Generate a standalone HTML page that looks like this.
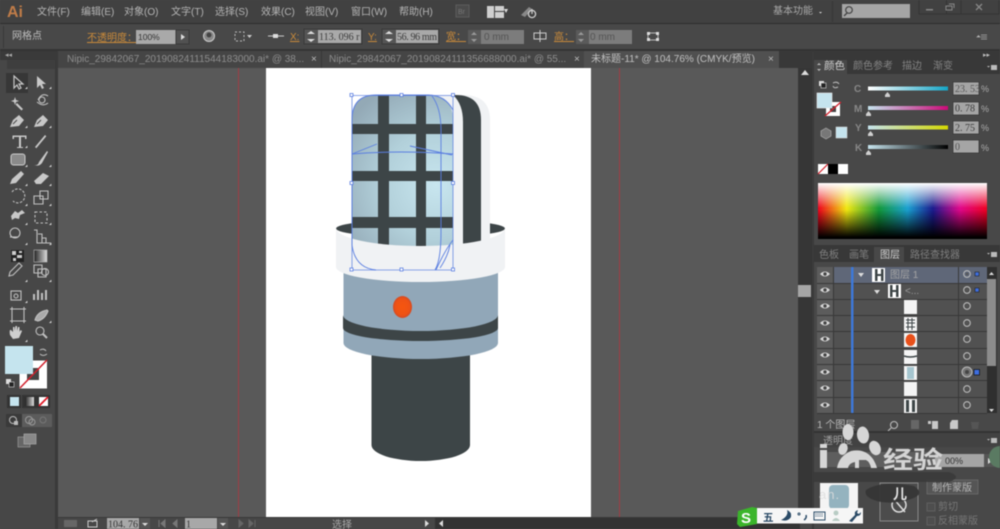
<!DOCTYPE html>
<html><head><meta charset="utf-8"><style>
html,body{margin:0;padding:0;width:1000px;height:529px;overflow:hidden;background:#4a4a4a}
svg{display:block;position:absolute;left:0;top:0;filter:blur(.45px)}
text{font-family:"Liberation Sans","Noto Sans CJK SC",sans-serif;font-size:10px;fill:#c4c4c4}
.m{font-size:10px;fill:#b4b4b4}
.o{fill:#c98a3a;font-size:10px}
.v{font-family:"Liberation Serif","Noto Sans CJK SC",serif;font-size:10px;fill:#3c3c3c}
.t{fill:#8d8d8d;font-size:10px}
</style></head><body>
<svg width="1000" height="529" viewBox="0 0 1000 529" xmlns="http://www.w3.org/2000/svg">
<defs>
<radialGradient id="gl" gradientUnits="userSpaceOnUse" cx="436" cy="185" r="108"><stop offset="0" stop-color="#c8e6ef"/><stop offset=".5" stop-color="#b2d0da"/><stop offset="1" stop-color="#93a9b6"/></radialGradient>
<radialGradient id="rd"><stop offset="0" stop-color="#f6560f"/><stop offset=".75" stop-color="#ee5215"/><stop offset="1" stop-color="#d24a24"/></radialGradient>
<linearGradient id="sp"><stop offset="0" stop-color="#ee001c"/><stop offset=".17" stop-color="#f0e810"/><stop offset=".36" stop-color="#12983a"/><stop offset=".53" stop-color="#19a0d0"/><stop offset=".68" stop-color="#1a1a8c"/><stop offset=".84" stop-color="#e0068a"/><stop offset="1" stop-color="#ee0020"/></linearGradient>
<linearGradient id="wb" x1="0" y1="0" x2="0" y2="1"><stop offset="0" stop-color="#fff"/><stop offset=".45" stop-color="#fff" stop-opacity="0"/><stop offset=".5" stop-color="#000" stop-opacity=".05"/><stop offset=".97" stop-color="#000"/></linearGradient>
<linearGradient id="sc"><stop offset="0" stop-color="#fff"/><stop offset="1" stop-color="#14a5c6"/></linearGradient>
<linearGradient id="sm"><stop offset="0" stop-color="#c6e4ee"/><stop offset="1" stop-color="#cc0a78"/></linearGradient>
<linearGradient id="sy"><stop offset="0" stop-color="#c6e4ee"/><stop offset="1" stop-color="#d4d800"/></linearGradient>
<linearGradient id="sk"><stop offset="0" stop-color="#c6e4ee"/><stop offset="1" stop-color="#000"/></linearGradient>
<linearGradient id="gr"><stop offset="0" stop-color="#222"/><stop offset="1" stop-color="#ddd"/></linearGradient>
<g id="eye"><path d="M-5 0Q0-5 5 0Q0 5-5 0Z" fill="#d8d8d8"/><circle r="1.700" fill="#444"/></g>
<g id="tg"><circle r="3.300" fill="none" stroke="#bbb" stroke-width="1.100"/><circle r="1.200" fill="#555"/></g>
<path id="tri" d="M0 0h2.400v-2.400z" fill="#d8d8d8"/>
</defs>

<!-- base -->
<rect width="1000" height="529" fill="#484848"/>
<rect width="1000" height="24" fill="#414141"/>
<rect y="23" width="1000" height="1" fill="#2e2e2e"/>
<rect y="24" width="1000" height="26" fill="#484848"/>
<rect y="49" width="1000" height="2" fill="#343434"/>
<!-- tabs bar -->
<rect x="0" y="51" width="812" height="17" fill="#383838"/>
<rect x="58" y="51" width="263" height="17" fill="#454545"/>
<rect x="322" y="51" width="262" height="17" fill="#454545"/>
<rect x="584" y="51" width="195" height="17" fill="#505050"/>
<!-- canvas -->
<rect x="58" y="68" width="740" height="449" fill="#595959"/>
<rect x="266" y="68" width="325" height="449" fill="#fff"/>
<rect x="238" y="68" width="1" height="449" fill="#a03c44"/>
<rect x="619" y="68" width="1" height="449" fill="#a03c44"/>
<!-- left toolbar -->
<rect x="0" y="51" width="57" height="478" fill="#474747"/>
<rect x="0" y="51" width="57" height="9" fill="#3a3a3a"/>
<rect x="7" y="60" width="50" height="9" fill="#3e3e3e"/>
<rect x="55" y="51" width="3" height="478" fill="#3a3a3a"/>
<!-- v scrollbar -->
<rect x="798" y="68" width="14" height="449" fill="#363636"/>
<rect x="798" y="285" width="13" height="12" fill="#a6a6a6"/>
<path d="M801 75l4-5 4 5z" fill="#ddd"/>
<rect x="812" y="51" width="2" height="478" fill="#3a3a3a"/>
<!-- status bar -->
<rect x="58" y="517" width="740" height="12" fill="#474747"/>
<rect x="435" y="517" width="365" height="12" fill="#333"/>
<rect x="58" y="517" width="740" height="1" fill="#383838"/>

<!-- menu -->
<text x="7" y="17" style="font-size:16px;fill:#c07c48;font-weight:bold">Ai</text>
<text class="m" x="37" y="15">文件(F)</text>
<text class="m" x="81" y="15">编辑(E)</text>
<text class="m" x="124" y="15">对象(O)</text>
<text class="m" x="171" y="15">文字(T)</text>
<text class="m" x="215" y="15">选择(S)</text>
<text class="m" x="261" y="15">效果(C)</text>
<text class="m" x="305" y="15">视图(V)</text>
<text class="m" x="351" y="15">窗口(W)</text>
<text class="m" x="399" y="15">帮助(H)</text>
<rect x="456" y="5" width="13" height="12" fill="#4b4b4b" stroke="#5c5c5c"/>
<text x="458" y="14" style="font-size:7px;fill:#777">Br</text>
<path d="M487 6h7v12h-7zM495 6h9v5h-9zM495 12h9v6h-9z" fill="#cfcfcf"/>
<path d="M504 9l4 0-2 4z" fill="#ddd"/>
<path d="M521 15l8-8 3 2-7 8z" fill="#888"/>
<circle cx="532" cy="14" r="3.600" fill="none" stroke="#cfcfcf" stroke-width="1.300"/><path d="M532 9v5" stroke="#cfcfcf" stroke-width="1.200"/>
<text class="m" x="773" y="14" style="fill:#a8a8a8">基本功能</text>
<path d="M819 12h3l-1.500 1.500z" fill="#ddd"/>
<rect x="832" y="1" width="1" height="21" fill="#363636"/>
<rect x="842" y="4" width="68" height="14" fill="#a5a5a5"/>
<circle cx="849" cy="10" r="3.300" fill="none" stroke="#444" stroke-width="1.200"/><path d="M847 13l-3 3" stroke="#444" stroke-width="1.300"/>
<path d="M919 0v14h80v-14M946.500 0v14M961 0v14" fill="none" stroke="#343434"/>
<rect x="926" y="9" width="7" height="1.500" fill="#888"/>
<path d="M946 6h6v4h-6zM949 4h5v4" fill="none" stroke="#888"/>
<path d="M976 4l6 6M982 4l-6 6" stroke="#888" stroke-width="1.300"/>

<!-- control bar -->
<rect x="3" y="26" width="1" height="22" fill="#383838"/>
<text x="12" y="39" style="fill:#bcbcbc">网格点</text>
<text class="o" x="87" y="41" text-decoration="underline">不透明度：</text>
<rect x="136" y="30" width="40" height="14" fill="#a9a9a9"/>
<text x="138" y="40" style="fill:#333;font-size:8.500px">100%</text>
<rect x="176" y="30" width="13" height="14" fill="#515151" stroke="#3a3a3a"/>
<path d="M181 34l4 3-4 3z" fill="#ddd"/>
<circle cx="209" cy="36" r="5.500" fill="#888" stroke="#ccc"/><circle cx="209" cy="35" r="2.500" fill="#444"/>
<rect x="235" y="32" width="9" height="9" fill="none" stroke="#bbb" stroke-dasharray="2 2"/>
<path d="M247 35h5l-2.500 3z" fill="#ccc"/>
<path d="M268 36h16" stroke="#ccc"/><rect x="273" y="34" width="5" height="4" fill="#ddd"/>
<text class="o" x="290" y="40" text-decoration="underline">X:</text>
<rect x="304" y="29" width="58" height="15" fill="#555" stroke="#383838"/>
<rect x="318" y="30" width="43" height="13" fill="#a9a9a9"/>
<path d="M307 34l4-3 4 3zM307 39l4 3 4-3z" fill="#ddd"/>
<text class="v" x="319" y="40">113. 096 r</text>
<text class="o" x="368" y="40" text-decoration="underline">Y:</text>
<rect x="382" y="29" width="57" height="15" fill="#555" stroke="#383838"/>
<rect x="396" y="30" width="42" height="13" fill="#a9a9a9"/>
<path d="M385 34l4-3 4 3zM385 39l4 3 4-3z" fill="#ddd"/>
<text class="v" x="397" y="40" textLength="40">56. 96 mm</text>
<text class="o" x="446" y="40" text-decoration="underline">宽：</text>
<rect x="468" y="30" width="56" height="14" fill="#7c7c7c"/>
<rect x="468" y="30" width="13" height="14" fill="#5a5a5a"/>
<path d="M471 35l3-3 3 3zM471 39l3 3 3-3z" fill="#999"/>
<text x="484" y="40" style="fill:#555">0 mm</text>
<path d="M534 33h12v6h-12z M540 30v12" fill="none" stroke="#ccc"/>
<text class="o" x="554" y="40" text-decoration="underline">高：</text>
<rect x="576" y="30" width="56" height="14" fill="#7c7c7c"/>
<rect x="576" y="30" width="13" height="14" fill="#5a5a5a"/>
<path d="M578 35l3-3 3 3zM578 39l3 3 3-3z" fill="#999"/>
<text x="590" y="40" style="fill:#555">0 mm</text>
<path d="M648 33h10v7h-10z" fill="none" stroke="#bbb"/><path d="M647 32h3v3h-3zM656 32h3v3h-3zM647 38h3v3h-3zM656 38h3v3h-3z" fill="#ddd"/>
<path d="M977 37h3l-1.500-1.500zM981 35h6M981 37h6M981 39h6" stroke="#aaa" fill="#ddd" stroke-width=".7"/>

<!-- tabs -->
<text x="5" y="57" style="font-size:7px;fill:#aaa">◂◂</text>
<text class="t" x="67" y="62">Nipic_29842067_20190824111544183000.ai* @ 38...</text>
<text class="t" x="311" y="62" style="fill:#bbb">×</text>
<text class="t" x="329" y="62">Nipic_29842067_20190824111356688000.ai* @ 55...</text>
<text class="t" x="574" y="62" style="fill:#bbb">×</text>
<text x="591" y="62" style="fill:#c0c0c0">未标题-11* @ 104.76% (CMYK/预览)</text>
<text x="768" y="62" style="fill:#bbb">×</text>

<!-- microphone -->
<path d="M371.500 340H470V445A49.250 16 0 0 1 371.500 445Z" fill="#3d4547"/>
<path d="M343.500 255H498V343A77.250 16 0 0 1 343.500 343Z" fill="#91a7b8"/>
<path d="M343 315A77.500 16 0 0 0 498 315V328A77.500 13 0 0 1 343 328Z" fill="#3d4547"/>
<ellipse cx="402.500" cy="307" rx="9.500" ry="11" fill="url(#rd)"/>
<ellipse cx="420.500" cy="228.500" rx="84.500" ry="9" fill="#3d4547"/>
<path d="M430 95h33q27 0 27 25v128h-60z" fill="#f0f2f4"/>
<path d="M453 95h3q25 0 25 25v128h-18V122q0-18-10-27z" fill="#3d4547"/>
<path d="M376 95h52q25 0 25 25v130h-101V120q0-25 24-25z" fill="url(#gl)"/>
<path d="M378 95h11v155h-11zM416 95h10v155h-10zM352 124h101v10h-101zM352 171h101v10h-101zM352 217h101v11h-101z" fill="#3d4547"/>
<path d="M336 228A84.500 18 0 0 0 505 228V267A84.500 15 0 0 1 336 267Z" fill="#f0f2f4"/>
<!-- selection -->
<g fill="none" stroke="#5a7ee0" stroke-width=".9">
<path d="M352 245V120Q352 95 376 95H428Q445 95 453 110"/>
<path d="M352 95.500H453M352 270H453M352 95V270M453 95V270" stroke-width=".8" opacity=".9"/>
<path d="M352 154Q400 150 453 154"/>
<path d="M352 154L377 144M410 146L452 155"/>
<path d="M432 96Q441 108 441 130V232Q441 260 435 270M352 245Q355 268 376 270M453 240Q445 250 436 270M450 245Q448 256 440 268"/>
</g>
<g fill="#fff" stroke="#5a7ee0" stroke-width=".8">
<rect x="350" y="93.500" width="3" height="3"/><rect x="400" y="93.500" width="3" height="3"/><rect x="451.500" y="93.500" width="3" height="3"/>
<rect x="350" y="181.500" width="3" height="3"/><rect x="451.500" y="181.500" width="3" height="3"/>
<rect x="350" y="268" width="3" height="3"/><rect x="400" y="268" width="3" height="3"/><rect x="451.500" y="268" width="3" height="3"/>
</g>

<!-- tools -->
<rect x="6" y="73" width="22" height="20" fill="#373737"/>
<path d="M14 76v12l3-3 2 4 2-1-2-4h4z" fill="none" stroke="#c8c8c8" stroke-width="1.200"/>
<g fill="#c8c8c8">
<path d="M37 76v12l3-3 2 4 2-1-2-4h4z"/>
<path d="M15 97l1 3 3 1-3 1-1 3-1-3-3-1 3-1zM17 103l6 6-1.500 1.500-6-6z"/>
<path d="M10 127l3-7 6-5 5 5-5 6zM34 127l3-7 6-5 5 5-5 6z"/>
<path d="M19 147v-10h-5v2h-1.500v-3.500h14v3.500H25v-2h-4v10h2v1h-6v-1z"/>
<path d="M35 147l10-12 1.300 1.300-10 12z"/>
<rect x="11" y="154" width="14" height="11" rx="2.500" fill="#8a8a8a" stroke="#ccc"/>
<path d="M34 165q4 1 5-3l8-11 1 1-6 11q-3 4-8 2z"/>
<path d="M10 184l2-5 9-8 3 3-8 9z"/>
<path d="M34 181l9-8 6 3-8 8h-5z"/>
<path d="M11 216l4-5 3 2 4-3 3 3-5 2-1 4-4-1-3 2z"/>
</g>
<path d="M13 124l4-4M37 124l4-4" stroke="#484848"/>
<g fill="none" stroke="#c0c0c0" stroke-width="1.100">
<path d="M38 100q4-8 10-4M37 102q6 5 11 1"/><circle cx="42" cy="100" r="3"/>
<path d="M11 190a7 7 0 1 1 1 9" stroke-dasharray="2.500 1.500" transform="translate(1,2)"/>
<path d="M34 196h9v8h-9zM40 191h8v8h-8z"/>
<path d="M35 212h12v11h-12z" stroke-dasharray="2.500 2"/>
<circle cx="15" cy="233" r="5"/><path d="M10 237h8"/>
<path d="M34 230h3v13h14v0M38 234h4v9M42 238h4v5"/>
<path d="M10 272l9-9 3 3-9 9-4 1z"/>
<path d="M34 265h8v8h-8zM38 269h8v8h-8z"/><circle cx="45" cy="272" r="3.500"/>
<rect x="11" y="291" width="10" height="9"/><circle cx="16" cy="296" r="2"/>
<path d="M34 300v-6M38 300v-10M42 300v-7M46 300v-10" stroke-width="2"/>
<path d="M12 309h12v12h-12zM10 309h16M10 321h16M12 307v16M24 307v16"/>
<path d="M35 320q2-8 12-10l1 1q-3 8-10 10z" fill="#aaa"/>
<circle cx="40" cy="331" r="4"/><path d="M43 334l4 4" stroke-width="2"/>
</g>
<path d="M10 335q-1-6 1-5l2 2v-5h1.500v4l1-5h1.500v5l1-4 1.500 0v5l1-2 1.500 1-3 7-6 1z" fill="#cfcfcf"/>
<rect x="11" y="250" width="13" height="12" fill="#222"/><path d="M12 251h4v4h-4zM17 255h5v3h-5zM13 258h3v3h-3zM19 251h3v2h-3z" fill="#ccc"/>
<rect x="34" y="250" width="13" height="12" fill="url(#gr)" stroke="#bbb" stroke-width=".6"/>
<use href="#tri" x="25" y="89"/><use href="#tri" x="49" y="89"/>
<use href="#tri" x="25" y="128"/><use href="#tri" x="49" y="128"/>
<use href="#tri" x="25" y="148"/><use href="#tri" x="25" y="167"/><use href="#tri" x="49" y="167"/>
<use href="#tri" x="25" y="186"/><use href="#tri" x="49" y="186"/>
<use href="#tri" x="25" y="206"/><use href="#tri" x="49" y="206"/>
<use href="#tri" x="25" y="225"/><use href="#tri" x="49" y="225"/>
<use href="#tri" x="25" y="245"/><use href="#tri" x="49" y="245"/>
<use href="#tri" x="25" y="282"/><use href="#tri" x="49" y="282"/>
<use href="#tri" x="25" y="303"/><use href="#tri" x="49" y="323"/><use href="#tri" x="25" y="342"/>

<!-- fill/stroke -->
<rect x="19.500" y="360.500" width="27.500" height="28" fill="#fff"/>
<rect x="27" y="368" width="12" height="12" fill="#444"/>
<path d="M20 388l27-28" stroke="#d2202c" stroke-width="1.500"/>
<rect x="5" y="346" width="28" height="28" fill="#c5e4ee"/>
<path d="M40 350q4-2 6 1M47 354q-4 3-7 0" fill="none" stroke="#bbb"/>
<rect x="6" y="379" width="5" height="5" fill="#ddd"/><rect x="9" y="382" width="5" height="5" fill="#222" stroke="#ddd" stroke-width=".6"/>
<rect x="7" y="395" width="14" height="13" fill="#333"/><rect x="10" y="397" width="9" height="9" fill="#c5e4ee"/>
<rect x="22" y="395" width="14" height="13" fill="#333"/><rect x="25" y="397" width="9" height="9" fill="url(#gr)"/>
<rect x="36" y="395" width="14" height="13" fill="#333"/><rect x="39" y="397" width="9" height="9" fill="#fff"/><path d="M39 406l9-9" stroke="#e01a28" stroke-width="1.800"/>
<rect x="6" y="414" width="16" height="13" fill="#3a3a3a"/><rect x="22" y="414" width="30" height="13" fill="#5c5c5c"/>
<circle cx="13" cy="420" r="3.500" fill="none" stroke="#bbb"/><rect x="14" y="421" width="4" height="4" fill="#bbb"/>
<circle cx="29" cy="420" r="3.500" fill="none" stroke="#999"/><circle cx="32" cy="422" r="3" fill="none" stroke="#999"/>
<circle cx="43" cy="420" r="3" fill="none" stroke="#777"/>
<rect x="18" y="437" width="12" height="10" fill="#666" stroke="#999" stroke-width=".7"/><rect x="24" y="434" width="12" height="10" fill="#888" stroke="#aaa" stroke-width=".7"/>

<!-- right panel: color -->
<rect x="814" y="51" width="186" height="23" fill="#383838"/>
<rect x="814" y="60" width="33" height="14" fill="#484848"/>
<text x="983" y="57" style="font-size:7px;fill:#bbb">▸▸</text>
<text x="824" y="69" style="fill:#d0d0d0;font-size:10.500px">颜色</text>
<text x="853" y="69" style="fill:#838383">颜色参考</text>
<text x="902" y="69" style="fill:#838383">描边</text>
<text x="933" y="69" style="fill:#838383">渐变</text>
<path d="M817 65l2-2 2 2zM817 69l2 2 2-2z" fill="#bbb"/>
<path d="M987 66h3l-1.500 1.500zM991 65h6v5h-6z" fill="#bbb"/>
<rect x="819" y="81" width="5" height="5" fill="#ddd"/><rect x="821" y="83" width="5" height="5" fill="#222" stroke="#ddd" stroke-width=".6"/>
<path d="M833 83q4-2 6 1M838 87q-4 2-5-1" fill="none" stroke="#bbb"/>
<rect x="826" y="102" width="14" height="14" fill="#fff"/><rect x="830" y="106" width="6" height="6" fill="#444"/>
<path d="M825 116l16-14" stroke="#d2202c" stroke-width="1.300"/>
<rect x="817" y="93" width="15" height="15" fill="#c5e4ee" stroke="#eee" stroke-width=".6"/>
<path d="M826 128l5 3v5l-5 3-5-3v-5z" fill="#777" stroke="#aaa" stroke-width=".7"/>
<rect x="836" y="127" width="11" height="11" fill="#c5e4ee" stroke="#ddd" stroke-width=".5"/>
<g style="font-size:9px">
<text x="854" y="92" style="fill:#888;font-weight:bold">C</text><text x="854" y="112" style="fill:#888;font-weight:bold">M</text><text x="855" y="131" style="fill:#888;font-weight:bold">Y</text><text x="855" y="151" style="fill:#888;font-weight:bold">K</text>
</g>
<rect x="868" y="86.500" width="80" height="4" fill="url(#sc)"/><rect x="868" y="106" width="80" height="4" fill="url(#sm)"/><rect x="868" y="125.500" width="80" height="4" fill="url(#sy)"/><rect x="868" y="145" width="80" height="4" fill="url(#sk)"/>
<path d="M885 95l2.500-3 2.500 3v2h-5zM866 114l2.500-3 2.500 3v2h-5zM868 134l2.500-3 2.500 3v2h-5zM866 153l2.500-3 2.500 3v2h-5z" fill="#d0d0d0"/>
<g fill="#a5a5a5" stroke="#383838" stroke-width=".8"><rect x="953" y="82" width="26" height="13"/><rect x="953" y="102" width="26" height="13"/><rect x="953" y="121" width="26" height="13"/><rect x="953" y="140" width="26" height="13"/></g>
<text class="v" x="955" y="92" style="fill:#555">23. 53</text><text class="v" x="955" y="111.500">0. 78</text><text class="v" x="955" y="131">2. 75</text><text class="v" x="955" y="150" style="fill:#555">0</text>
<text x="981" y="92" style="fill:#aaa;font-size:9px">%</text><text x="981" y="112" style="fill:#aaa;font-size:9px">%</text><text x="981" y="131" style="fill:#aaa;font-size:9px">%</text><text x="981" y="151" style="fill:#aaa;font-size:9px">%</text>
<rect x="818" y="164" width="10" height="10" fill="#fff"/><path d="M818 174l10-10" stroke="#d2202c" stroke-width="1.200"/><rect x="828" y="164" width="10" height="10" fill="#000"/><rect x="838" y="164" width="10" height="10" fill="#fff"/>
<rect x="818" y="183" width="169" height="56" fill="url(#sp)"/><rect x="818" y="183" width="169" height="56" fill="url(#wb)"/>

<!-- layers -->
<rect x="814" y="245" width="186" height="17" fill="#383838"/>
<rect x="874" y="247" width="30" height="15" fill="#484848"/>
<text x="819" y="258" style="fill:#7f7f7f">色板</text><text x="849" y="258" style="fill:#7f7f7f">画笔</text><text x="880" y="258" style="fill:#d0d0d0">图层</text><text x="910" y="258" style="fill:#7f7f7f">路径查找器</text>
<path d="M987 253h3l-1.500 1.500zM991 252h6v5h-6z" fill="#bbb"/>
<rect x="817" y="267" width="170" height="146" fill="#515151"/>
<rect x="817" y="267" width="170" height="16" fill="#5f6778"/>
<rect x="817" y="267" width="16" height="146" fill="#5c5c5c"/>
<g fill="#383838">
<rect x="817" y="283" width="170" height="1"/><rect x="817" y="299" width="170" height="1"/><rect x="817" y="315" width="170" height="1"/><rect x="817" y="331" width="170" height="1"/><rect x="817" y="348" width="170" height="1"/><rect x="817" y="364" width="170" height="1"/><rect x="817" y="380" width="170" height="1"/><rect x="817" y="397" width="170" height="1"/><rect x="817" y="413" width="170" height="1"/>
<rect x="833" y="267" width="1" height="146"/><rect x="958" y="267" width="1" height="146"/>
</g>
<rect x="851" y="267" width="2.500" height="146" fill="#3d78d8"/>
<use href="#eye" x="825" y="274"/><use href="#eye" x="825" y="290"/><use href="#eye" x="825" y="306"/><use href="#eye" x="825" y="323"/><use href="#eye" x="825" y="339"/><use href="#eye" x="825" y="355"/><use href="#eye" x="825" y="372"/><use href="#eye" x="825" y="388"/><use href="#eye" x="825" y="405"/>
<path d="M858 273h6l-3 4z" fill="#ddd"/><path d="M874 290h6l-3 4z" fill="#ddd"/>
<rect x="872" y="268" width="13" height="14" fill="#fff"/><path d="M875 269h2.500v12H875zM881 269h2.500v12H881zM875 274h8v2h-8z" fill="#3d4547"/>
<rect x="888" y="284" width="13" height="14" fill="#fff"/><path d="M890 285h2.500v12H890zM896 285h2.500v12H896zM890 290h8v2h-8z" fill="#3d4547"/>
<text x="890" y="278" style="fill:#a5a5a5">图层 1</text>
<text x="905" y="294" style="fill:#9a9a9a">&lt;...</text>
<g fill="#f4f4f4">
<rect x="904" y="300" width="13" height="14"/><rect x="904" y="317" width="13" height="14"/><rect x="904" y="333" width="13" height="14"/><rect x="904" y="350" width="13" height="14"/><rect x="904" y="366" width="13" height="14"/><rect x="904" y="382" width="13" height="14"/><rect x="904" y="399" width="13" height="14"/>
</g>
<path d="M906 320h9M906 323h9M906 327h9M908 318v12M912 318v12" stroke="#3d4547" stroke-width="1"/>
<ellipse cx="910.500" cy="340" rx="5" ry="6" fill="#e9501a"/>
<path d="M904 356q6 2 13 0" stroke="#3d4547" stroke-width="1.500" fill="none"/>
<rect x="907" y="367" width="7" height="12" fill="#a5c5cf"/>
<rect x="906" y="400" width="3" height="12" fill="#3d4547"/><rect x="912" y="400" width="3" height="12" fill="#3d4547"/>
<use href="#tg" x="967" y="274"/><use href="#tg" x="967" y="290"/><use href="#tg" x="967" y="306"/><use href="#tg" x="967" y="323"/><use href="#tg" x="967" y="339"/><use href="#tg" x="967" y="356"/><use href="#tg" x="967" y="389"/><use href="#tg" x="967" y="405"/>
<circle cx="967" cy="372" r="5" fill="#777" stroke="#bbb"/><circle cx="967" cy="372" r="2" fill="#444"/>
<rect x="975" y="272" width="4" height="4" fill="#3e6ee0" stroke="#222" stroke-width=".6"/><rect x="975" y="288" width="4" height="4" fill="#3e6ee0" stroke="#222" stroke-width=".6"/><rect x="974" y="369.500" width="5.500" height="5.500" fill="#3e6ee0" stroke="#111" stroke-width=".7"/>
<rect x="987" y="267" width="10" height="146" fill="#2f2f2f"/><rect x="987" y="279" width="9" height="87" fill="#8c8c8c"/>
<path d="M989 275l2.500-3 2.500 3zM989 409l2.500 3 2.500-3z" fill="#ddd"/>
<text x="817" y="428" style="fill:#b8b8b8">1 个图层</text>
<circle cx="894" cy="425" r="3.500" fill="none" stroke="#bbb" stroke-width="1.100"/><path d="M891 428l-3 3" stroke="#bbb" stroke-width="1.200"/>
<rect x="911" y="420" width="8" height="9" fill="#666"/>
<path d="M928 421h3v3h-3zM932 421h6v8h-6z" fill="#c8c8c8"/><path d="M952 420h6v9h-8v-6z" fill="#c8c8c8"/>
<path d="M971 422h8l-1 7h-6z" fill="#555"/>

<!-- transparency panel -->
<rect x="814" y="431" width="186" height="2" fill="#333"/>
<rect x="814" y="433" width="186" height="14" fill="#424242"/>
<text x="823" y="444" style="fill:#a0a0a0">透明度</text>
<path d="M987 439h3l-1.500 1.500zM991 438h6v5h-6z" fill="#bbb"/>
<rect x="820" y="452" width="115" height="15" fill="#5e5e5e"/>
<rect x="935" y="454" width="49" height="13" fill="#a5a5a5"/>
<text x="945" y="464" style="fill:#333;font-size:9px">00%</text>
<rect x="984" y="454" width="12" height="13" fill="#555"/><path d="M988 458l4 3-4 3z" fill="#ddd"/>
<circle cx="1000" cy="457" r="11" fill="#5a7a62"/>
<rect x="820" y="483" width="38" height="26" fill="#f4f4f4"/>
<rect x="829" y="485" width="20" height="24" rx="4" fill="#94b3bf"/>
<rect x="880" y="483" width="38" height="38" fill="#4c4c4c" stroke="#888"/>
<circle cx="899" cy="505" r="7" fill="none" stroke="#ddd" stroke-width="1.500"/><path d="M893 498l12 14" stroke="#ddd" stroke-width="1.500"/>
<rect x="927" y="480" width="51" height="14" fill="#555" stroke="#777" stroke-width=".6"/>
<text x="932" y="491" style="fill:#b8b8b8">制作蒙版</text>
<rect x="927" y="503" width="8" height="8" fill="#4e4e4e" stroke="#5f5f5f"/><text x="938" y="510" style="fill:#777">剪切</text>
<rect x="927" y="517" width="8" height="8" fill="#4e4e4e" stroke="#5f5f5f"/><text x="938" y="524" style="fill:#777">反相蒙版</text>

<!-- watermark -->
<path d="M814 472h135q14 5 0 10h-135z" fill="#3a3a3a" opacity=".9"/>
<path d="M866 490q15-10 48-4q12 8-3 13q-14 5-30 3q-18-4-15-12z" fill="#363636" opacity=".95"/>
<g fill="#d6d6d6">
<ellipse cx="848" cy="432" rx="5.500" ry="8"/><ellipse cx="863" cy="435" rx="6" ry="8.500" transform="rotate(-8 863 435)"/><ellipse cx="875" cy="448" rx="5.500" ry="7.500" transform="rotate(-25 875 448)"/><ellipse cx="843" cy="449" rx="4.500" ry="6" transform="rotate(20 843 449)"/>
<path d="M837 468q2-12 14-17q14-3 22 8q3 5 4 9h-6q-1-6-5-8h-7v8h-4v-6q-6 1-7 6z"/>
<rect x="820" y="450" width="7" height="18"/><rect x="820" y="444" width="7" height="4"/>
</g>
<text x="883" y="468" textLength="60" lengthAdjust="spacingAndGlyphs" style="font-size:24px;font-weight:bold;fill:#d4d4d4">经验</text>
<text x="819" y="499" style="font-size:13px;fill:#ddd;letter-spacing:1px" opacity=".85">an.</text>
<text x="893" y="499" style="font-size:14px;fill:#e4e4e4;font-weight:bold">儿</text>

<!-- sogou bar -->
<rect x="750" y="508" width="113" height="15.500" fill="#f6f6f6"/>
<path d="M738 511l14-4 5 1v16l-17 3-3-3z" fill="#3bb52b"/>
<text x="741" y="523" style="font-size:15px;font-weight:bold;fill:#fff">S</text>
<text x="763" y="521" style="font-size:10.500px;fill:#2a4a66;font-weight:bold">五</text>
<path d="M787 510q2 6-6 10q7 2 10-3q1-5-4-7z" fill="#2a4a66"/>
<circle cx="799" cy="514" r="1" fill="none" stroke="#2a4a66"/><path d="M806 515q1 3-2 5" stroke="#2a4a66" stroke-width="1.500" fill="none"/>
<rect x="814" y="512" width="11" height="8" fill="none" stroke="#2a4a66"/><path d="M815.500 514h8M815.500 516h8" stroke="#2a4a66" stroke-dasharray="1 1"/>
<circle cx="836" cy="513" r="2.500" fill="#b8ccc4"/><path d="M832 521q4-6 8 0z" fill="#b8ccc4"/>
<path d="M849 521l6-6q-1-4 3-5l-1 3 2 1 2-2q0 4-4 4l-5 6z" fill="#2a4a66"/>

<!-- status bar content -->
<rect x="64" y="520" width="13" height="7" fill="#666"/>
<path d="M88 521h9v6h-9zM92 522l5-3" fill="none" stroke="#ccc"/>
<rect x="107" y="518" width="32" height="11" fill="#a8a8a8"/>
<text class="v" x="108" y="527.500" style="fill:#333">104. 76</text>
<rect x="140" y="518" width="10" height="11" fill="#555"/><path d="M142 523h6l-3 3z" fill="#ddd"/>
<path d="M159 520v7M165 520l-4 3.500 4 3.500zM177 520l-4 3.500 4 3.500z" stroke="#777" fill="#777"/>
<rect x="185" y="518" width="32" height="11" fill="#a8a8a8"/>
<text class="v" x="186" y="527.500" style="fill:#333">1</text>
<rect x="218" y="518" width="10" height="11" fill="#555"/><path d="M220 523h6l-3 3z" fill="#ddd"/>
<path d="M239 520l4 3.500-4 3.500zM249 520l4 3.500-4 3.500zM255 520v7" stroke="#666" fill="#666"/>
<text x="332" y="528" style="fill:#aaa">选择</text>
<path d="M425 520l4 3.500-4 3.500z" fill="#ddd"/>
<path d="M443 520l-4 3.500 4 3.500z" fill="#ddd"/>
</svg>
</body></html>
